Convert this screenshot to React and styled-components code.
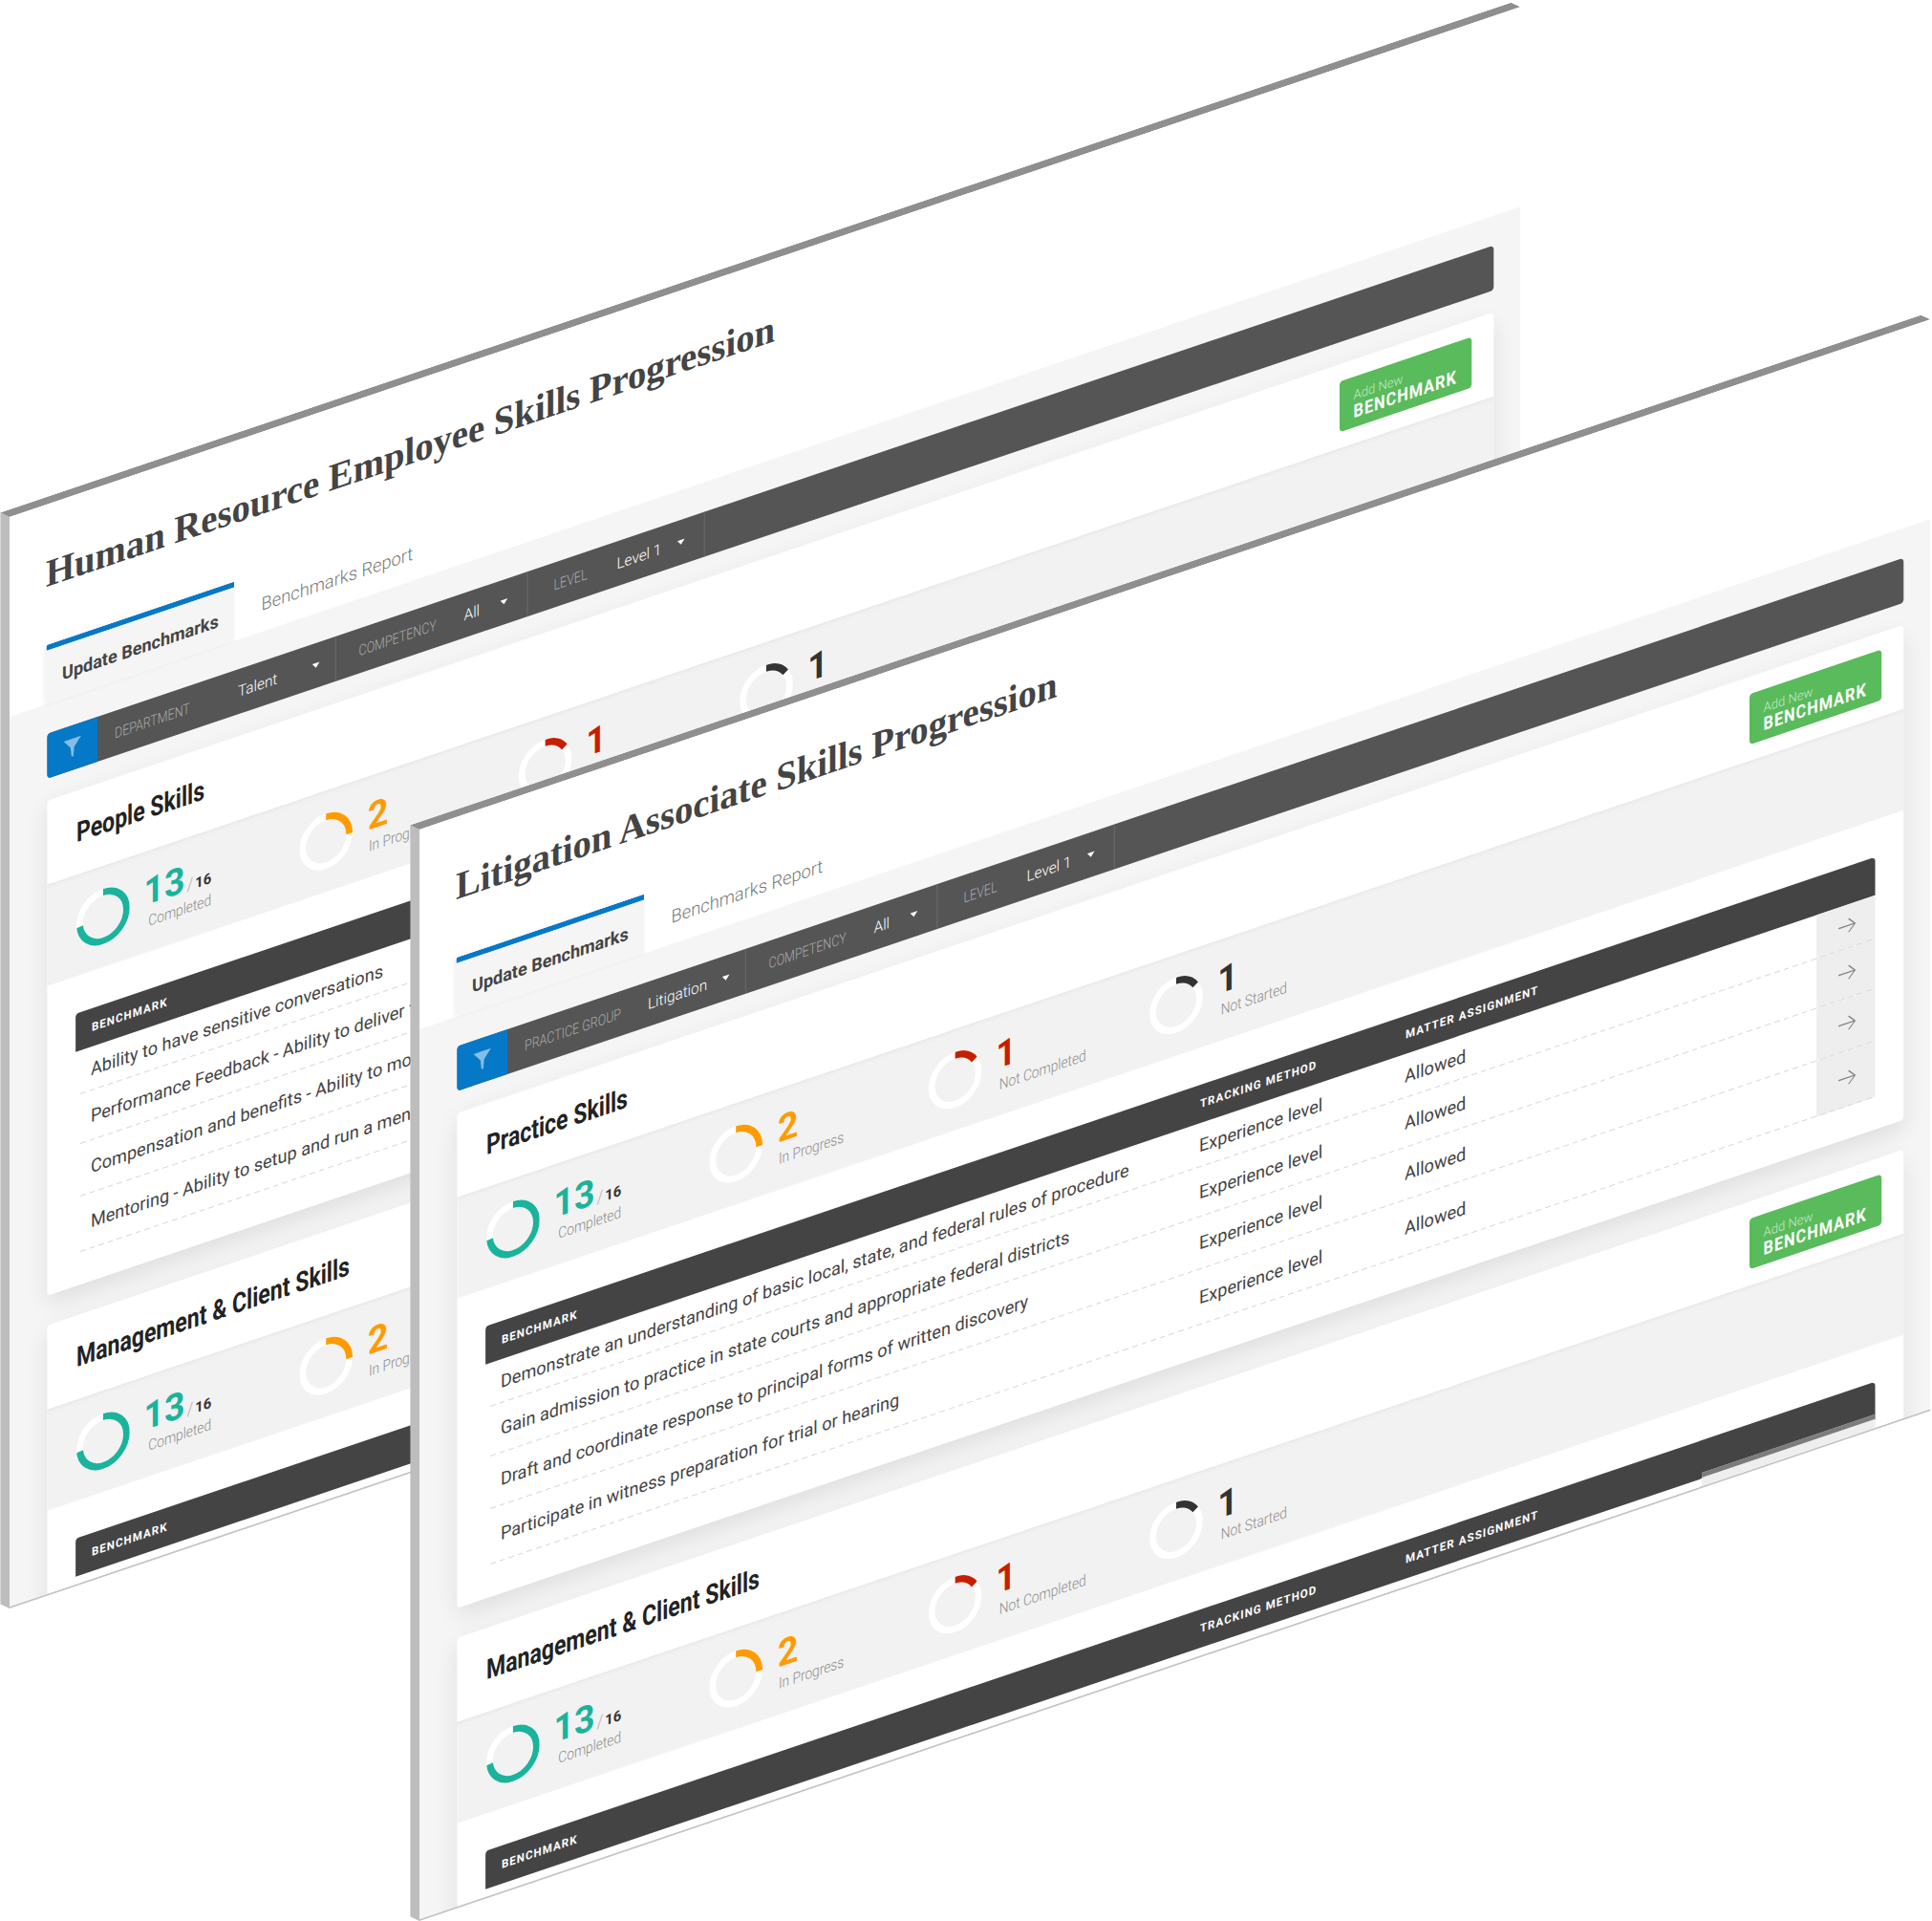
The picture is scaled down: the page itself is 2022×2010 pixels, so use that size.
import React from 'react';
import styled, { createGlobalStyle } from 'styled-components';

// x is squeezed a little, the rest of the tilt comes from the skew
const TILT = 'matrix(0.96, -0.324, 0, 1, 0, 0)';

const GlobalStyle = createGlobalStyle`
  html, body {
    margin: 0;
    padding: 0;
    background: #fff;
  }
  body {
    font-family: Roboto, "Liberation Sans", sans-serif;
    color: #444;
  }
`;

const Desktop = styled.div`
  position: relative;
  width: 2022px;
  height: 2010px;
  overflow: hidden;
  background: #fff;
`;

const Screen = styled.div`
  position: absolute;
  left: ${(p) => p.$left}px;
  top: ${(p) => p.$top}px;
  width: 1647px;
  height: 1140px;
  transform: ${TILT};
  transform-origin: 0 0;
  background: #fff;
  border-bottom: 2px solid #c4c4c4;

  &::before {
    content: '';
    position: absolute;
    left: -10.4px;
    top: -8px;
    width: calc(100% + 10.4px);
    height: 8px;
    background: #8f8f8f;
    clip-path: polygon(0 0, calc(100% - 10.4px) 0, 100% 100%, 10.4px 100%);
  }

  &::after {
    content: '';
    position: absolute;
    left: -10.4px;
    top: -8px;
    width: 10.4px;
    height: calc(100% + 10px);
    background: #bdbdbd;
    clip-path: polygon(0 0, 100% 8px, 100% 100%, 0 calc(100% - 8px));
  }
`;

const Head = styled.header`
  height: 209px;
  padding-left: 39.6px;
  box-sizing: border-box;
  display: flex;
  flex-direction: column;
  background: #fff;
`;

const Title = styled.h1`
  margin: 0;
  height: 147px;
  box-sizing: border-box;
  padding-top: 49px;
  font-family: "Liberation Serif", "Times New Roman", serif;
  font-size: 40.3px;
  line-height: 48px;
  font-weight: 700;
  color: #444;
  white-space: nowrap;
`;

const Tabs = styled.nav`
  display: flex;
  height: 62px;
`;

const ActiveTab = styled.div`
  width: 205px;
  box-sizing: border-box;
  padding: 19px 0 0 17.7px;
  background: #f5f5f5;
  border-top: 6px solid #0678c8;
  border-radius: 3px 0 0 0;
  box-shadow: -2px 0 4px rgba(0, 0, 0, 0.06);
  font-size: 18.8px;
  line-height: 22px;
  font-weight: 700;
  color: #444;
  white-space: nowrap;
`;

const Tab = styled.div`
  padding: 23px 0 0 30px;
  font-size: 19px;
  line-height: 22px;
  font-weight: 300;
  color: #777;
  white-space: nowrap;
`;

const Page = styled.main`
  height: 931px;
  overflow: hidden;
  box-sizing: border-box;
  padding: 30.5px 28.6px 0 40.6px;
  background: #f5f5f5;
`;

const FilterBar = styled.div`
  display: flex;
  height: 47px;
  background: #555;
  border-radius: 4px;
  overflow: hidden;
  margin-bottom: 23.5px;
`;

const FilterButton = styled.div`
  width: 55.2px;
  display: flex;
  align-items: center;
  justify-content: center;
  background: #0678c8;
`;

const Field = styled.div`
  display: flex;
  align-items: center;
  width: ${(p) => p.$width}px;
  box-sizing: border-box;
  padding-left: ${(p) => p.$pad}px;
  border-right: 1px solid #6c6c6c;
`;

// the labels in the reference are narrower than Roboto, so stretch them up
const FieldLabel = styled.span`
  width: ${(p) => p.$width}px;
  font-size: 13px;
  font-weight: 300;
  color: #aaa;
  white-space: nowrap;
  transform: scaleY(1.2);
`;

const FieldValue = styled.span`
  width: ${(p) => p.$width}px;
  font-size: 16px;
  font-weight: 300;
  color: #fff;
  white-space: nowrap;
`;

const Caret = styled.span`
  width: 0;
  height: 0;
  border-left: 4.5px solid transparent;
  border-right: 4.5px solid transparent;
  border-top: 5px solid #fff;
`;

const Card = styled.section`
  height: ${(p) => p.$height}px;
  margin-bottom: 31px;
  background: #fff;
  border-radius: 4px;
  box-shadow: 0 10px 24px rgba(0, 0, 0, 0.09);
`;

const CardHead = styled.div`
  display: flex;
  align-items: flex-start;
  justify-content: space-between;
  height: 88px;
  box-sizing: border-box;
  padding: 18px 24px 0 32.3px;
`;

const CardTitle = styled.h2`
  margin: 14px 0 0;
  font-size: 24px;
  line-height: 28px;
  font-weight: 700;
  color: #222;
  white-space: nowrap;
  transform: scaleY(1.2);
  transform-origin: 0 80%;
`;

const AddButton = styled.button`
  width: 144.8px;
  height: 53px;
  box-sizing: border-box;
  padding: 5px 0 0 15.6px;
  border: 0;
  border-radius: 4px;
  background: #59bb5b;
  color: #fff;
  text-align: left;
  font-family: inherit;
`;

const AddSmall = styled.span`
  display: block;
  font-size: 13.6px;
  line-height: 16.5px;
  font-weight: 300;
  color: #c6e8c7;
`;

const AddBig = styled.span`
  display: block;
  font-size: 17px;
  line-height: 20px;
  font-weight: 700;
  letter-spacing: 1px;
  transform: scaleY(1.12);
  transform-origin: 0 80%;
`;

const StatsBand = styled.div`
  display: flex;
  align-items: center;
  height: 106px;
  box-sizing: border-box;
  padding-left: 32.3px;
  background: #f2f2f2;
  box-shadow: inset 0 4px 5px -3px rgba(0, 0, 0, 0.06);
`;

const Stat = styled.div`
  display: flex;
  align-items: center;
  width: ${(p) => p.$width}px;
  gap: ${(p) => p.$gap}px;
`;

const StatText = styled.div`
  display: flex;
  flex-direction: column;
`;

const StatValue = styled.div`
  display: flex;
  align-items: baseline;
  height: 38px;
  font-size: 39px;
  line-height: 38px;
  font-weight: 700;
  color: ${(p) => p.$color};
`;

const StatSlash = styled.span`
  margin-left: 2px;
  font-size: 18px;
  font-weight: 300;
  color: #aaa;
`;

const StatTotal = styled.span`
  margin-left: 2px;
  font-size: 15.4px;
  font-weight: 700;
  color: #333;
`;

const StatLabel = styled.div`
  margin: 3px 0 0 ${(p) => p.$indent}px;
  font-size: 14.3px;
  line-height: 18px;
  font-weight: 300;
  color: #8c8c8c;
  white-space: nowrap;
  transform: scaleY(1.12);
  transform-origin: 0 80%;
`;

const Table = styled.div`
  margin: 39px 31.2px 0;
`;

const TableHead = styled.div`
  display: grid;
  grid-template-columns: 761.5px 224px 1fr;
  align-items: center;
  height: 40px;
  padding-left: 17.7px;
  background: #444;
  border-radius: 4px 4px 0 0;
  font-size: 12px;
  font-weight: 700;
  letter-spacing: 1.1px;
  color: #fff;
  white-space: nowrap;
`;

const Row = styled.div`
  position: relative;
  display: grid;
  grid-template-columns: 761.5px 224px 1fr 64.6px;
  align-items: center;
  height: ${(p) => p.$height}px;
  padding-left: 16.7px;
  font-size: 18.85px;
  color: #444;
  white-space: nowrap;

  &::after {
    content: '';
    position: absolute;
    left: 5px;
    right: 0;
    bottom: 0;
    height: 1px;
    background: repeating-linear-gradient(90deg, #d6d6d6 0 6px, transparent 6px 10px);
  }
`;

const RowCell = styled.span`
  padding-top: 1px;
`;

const ArrowCell = styled.div`
  align-self: stretch;
  display: flex;
  align-items: center;
  justify-content: center;
  padding: 0 0 3px 3px;
  background: #eee;
  color: #858585;
`;

// the lighter panel that sits on the lower right corner of the front window
const CornerPanel = styled.div`
  position: absolute;
  right: 60.4px;
  bottom: 0;
  width: 188.5px;
  height: 14px;
  box-sizing: border-box;
  background: #eee;
  border-top: 5px solid #7c7c7c;
`;

const Filter = () => (
  <svg width="21" height="22" viewBox="0 0 21 22">
    <path d="M1 2 L20 2 L12.5 11 L11.5 21 L9.5 20 L8.5 11 Z" fill="#86bde6" />
  </svg>
);

const Arrow = () => (
  <svg width="20" height="16" viewBox="0 0 20 16" fill="none" stroke="currentColor" strokeWidth="1.3">
    <path d="M1 8 H19 M12 1 L19 8 L12 15" />
  </svg>
);

const Ring = ({ color, angle }) => {
  const r = 25.5;
  const circ = 2 * Math.PI * r;
  const len = (angle / 360) * circ;
  return (
    <svg width="58" height="58" viewBox="0 0 58 58">
      <circle cx="29" cy="29" r={r} fill="none" stroke="#fff" strokeWidth="7" />
      <circle
        cx="29"
        cy="29"
        r={r}
        fill="none"
        stroke={color}
        strokeWidth="7"
        strokeDasharray={`${len} ${circ}`}
        transform="rotate(-90 29 29)"
      />
    </svg>
  );
};

const rowHeights = [46, 52, 55, 58];

const SkillCard = ({ title, height, rows }) => (
  <Card $height={height}>
    <CardHead>
      <CardTitle>{title}</CardTitle>
      <AddButton>
        <AddSmall>Add New</AddSmall>
        <AddBig>BENCHMARK</AddBig>
      </AddButton>
    </CardHead>
    <StatsBand>
      <Stat $width={243} $gap={15.5}>
        <Ring color="#1ab39b" angle={262} />
        <StatText>
          <StatValue $color="#1ab39b">
            13<StatSlash>/</StatSlash><StatTotal>16</StatTotal>
          </StatValue>
          <StatLabel $indent={5}>Completed</StatLabel>
        </StatText>
      </Stat>
      <Stat $width={239.5} $gap={16.7}>
        <Ring color="#ff9b00" angle={90} />
        <StatText>
          <StatValue $color="#ff9b00">2</StatValue>
          <StatLabel $indent={1}>In Progress</StatLabel>
        </StatText>
      </Stat>
      <Stat $width={240.6} $gap={15}>
        <Ring color="#c81e00" angle={55} />
        <StatText>
          <StatValue $color="#c81e00">1</StatValue>
          <StatLabel $indent={3.6}>Not Completed</StatLabel>
        </StatText>
      </Stat>
      <Stat $width={240.6} $gap={16}>
        <Ring color="#333" angle={55} />
        <StatText>
          <StatValue $color="#333">1</StatValue>
          <StatLabel $indent={3.6}>Not Started</StatLabel>
        </StatText>
      </Stat>
    </StatsBand>
    <Table>
      <TableHead>
        <span>BENCHMARK</span>
        <span>TRACKING METHOD</span>
        <span>MATTER ASSIGNMENT</span>
      </TableHead>
      {rows.map((text, i) => (
        <Row key={text} $height={rowHeights[i]}>
          <RowCell>{text}</RowCell>
          <RowCell>Experience level</RowCell>
          <RowCell>Allowed</RowCell>
          <ArrowCell>
            <Arrow />
          </ArrowCell>
        </Row>
      ))}
    </Table>
  </Card>
);

const Window = ({ left, top, title, group, groupValue, skills, rows, second }) => (
  <Screen $left={left} $top={top}>
    <Head>
      <Title>{title}</Title>
      <Tabs>
        <ActiveTab>Update Benchmarks</ActiveTab>
        <Tab>Benchmarks Report</Tab>
      </Tabs>
    </Head>
    <Page>
      <FilterBar>
        <FilterButton>
          <Filter />
        </FilterButton>
        <Field $width={260} $pad={18.75}>
          <FieldLabel $width={134.4}>{group}</FieldLabel>
          <FieldValue $width={80.8}>{groupValue}</FieldValue>
          <Caret />
        </Field>
        <Field $width={209.4} $pad={25}>
          <FieldLabel $width={114.6}>COMPETENCY</FieldLabel>
          <FieldValue $width={39.2}>All</FieldValue>
          <Caret />
        </Field>
        <Field $width={192.7} $pad={28}>
          <FieldLabel $width={68.75}>LEVEL</FieldLabel>
          <FieldValue $width={66.25}>Level 1</FieldValue>
          <Caret />
        </Field>
      </FilterBar>
      <SkillCard title={skills} height={518} rows={rows} />
      <SkillCard title={second} height={518} rows={[]} />
    </Page>
    <CornerPanel />
  </Screen>
);

const App = () => (
  <Desktop>
    <GlobalStyle />
    <Window
      left={10}
      top={540.6}
      title="Human Resource Employee Skills Progression"
      group="DEPARTMENT"
      groupValue="Talent"
      skills="People Skills"
      second="Management & Client Skills"
      rows={[
        'Ability to have sensitive conversations',
        'Performance Feedback - Ability to deliver feedback',
        'Compensation and benefits - Ability to motivate',
        'Mentoring - Ability to setup and run a mentoring program',
      ]}
    />
    <Window
      left={439}
      top={867.6}
      title="Litigation Associate Skills Progression"
      group="PRACTICE GROUP"
      groupValue="Litigation"
      skills="Practice Skills"
      second="Management & Client Skills"
      rows={[
        'Demonstrate an understanding of basic local, state, and federal rules of procedure',
        'Gain admission to practice in state courts and appropriate federal districts',
        'Draft and coordinate response to principal forms of written discovery',
        'Participate in witness preparation for trial or hearing',
      ]}
    />
  </Desktop>
);

export default App;
